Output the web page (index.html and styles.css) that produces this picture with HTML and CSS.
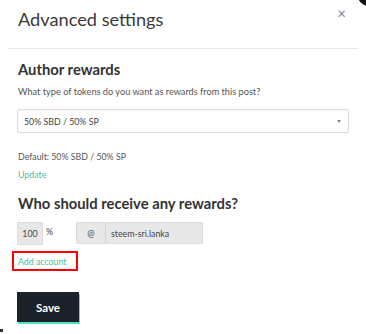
FILE: index.html
```html
<!DOCTYPE html>
<html>
<head>
<meta charset="utf-8">
<link rel="stylesheet" href="styles.css">
</head>
<body>
<div class="modal">
  <div class="corner"></div>
  <div class="head">
    <h1 class="title">Advanced settings</h1>
    <span class="close">×</span>
  </div>
  <div class="rule"></div>
  <div class="content">
    <h2 class="section">Author rewards</h2>
    <p class="hint">What type of tokens do you want as rewards from this post?</p>
    <div class="select"><span>50% SBD / 50% SP</span><span class="caret"></span></div>
    <p class="default">Default: 50% SBD / 50% SP</p>
    <a class="link">Update</a>
    <h2 class="section second">Who should receive any rewards?</h2>
    <div class="row">
      <div class="pct">100</div>
      <span class="pctsign">%</span>
      <div class="at">@</div>
      <div class="acct">steem-sri.lanka</div>
    </div>
    <div class="addwrap"><a class="link">Add account</a></div>
    <button class="save">Save</button>
  </div>
  <div class="mark"></div>
</div>
</body>
</html>
```
FILE: styles.css
```css
* { box-sizing: border-box; }
html, body { margin: 0; padding: 0; background: #fff; }
body { font-family: Lato, "Open Sans", sans-serif; color: #333; width: 366px; height: 334px; overflow: hidden; }
.modal { position: relative; width: 366px; height: 334px; }
.corner { position: absolute; top: -14px; right: -14px; width: 22px; height: 20px; background: #111; border-radius: 50%; }
.head { display: flex; justify-content: space-between; padding: 6px 20px 0 18px; height: 48px; }
.title { margin: 0; font-weight: 400; font-size: 18.2px; line-height: 26px; color: #3a3a3a; }
.close { font-size: 15px; line-height: 14px; color: #7d8595; margin-top: 0; }
.rule { height: 1px; background: #e8e8e8; margin: 0 8px 0 8px; }
.content { padding: 0 17px 0 17px; }
.section { margin: 11px 0 0 1px; font-size: 14.8px; font-weight: 700; line-height: 18px; color: #333; }
.hint { margin: 8px 0 0 1px; font-size: 9.2px; line-height: 11px; color: #555; }
.select { margin-top: 12px; height: 24px; width: 332px; border: 1px solid #ddd; border-radius: 2px; display: flex; align-items: center; justify-content: space-between; padding: 0 7px 0 6px; font-size: 8.8px; color: #444; box-shadow: inset 0 1px 1px rgba(0,0,0,0.04); }
.caret { width: 0; height: 0; border-left: 2.5px solid transparent; border-right: 2.5px solid transparent; border-top: 3px solid #888; }
.default { margin: 18px 0 0 1px; font-size: 8.8px; line-height: 11px; color: #555; }
.link { display: inline-block; margin: 0 0 0 1px; font-size: 8.8px; line-height: 11px; color: #4bc0a0; }
.section.second { margin-top: 13px; }
.row { display: flex; align-items: flex-start; margin-top: 10px; font-size: 8.8px; color: #444; }
.pct { width: 26px; height: 23px; background: #e8e8e8; border: 1px solid #ddd; display: flex; align-items: center; justify-content: center; }
.pctsign { margin: 4px 0 0 3px; width: 30px; }
.at { width: 30px; height: 22px; background: #e8e8e8; border: 1px solid #ddd; border-right: 1px solid #d4d4d4; display: flex; align-items: center; justify-content: center; border-radius: 2px 0 0 2px; }
.acct { width: 97px; height: 22px; background: #e8e8e8; border: 1px solid #ddd; border-left: none; display: flex; align-items: center; padding-left: 5px; }
.addwrap { margin: 6px 0 0 -5px; width: 66px; height: 20px; border: 2px solid #f00; display: flex; align-items: center; padding-left: 4px; }
.addwrap .link { margin: 0; }
.save { display: block; margin-top: 21px; width: 62px; height: 30px; background: #1b2229; color: #fff; border: none; font-family: Lato, sans-serif; font-weight: 700; font-size: 11.5px; box-shadow: 1px 2px 0 #4fe3c1; padding: 0; }
.mark { position: absolute; left: 0; bottom: 2px; width: 3px; height: 3px; background: #333; }
```
